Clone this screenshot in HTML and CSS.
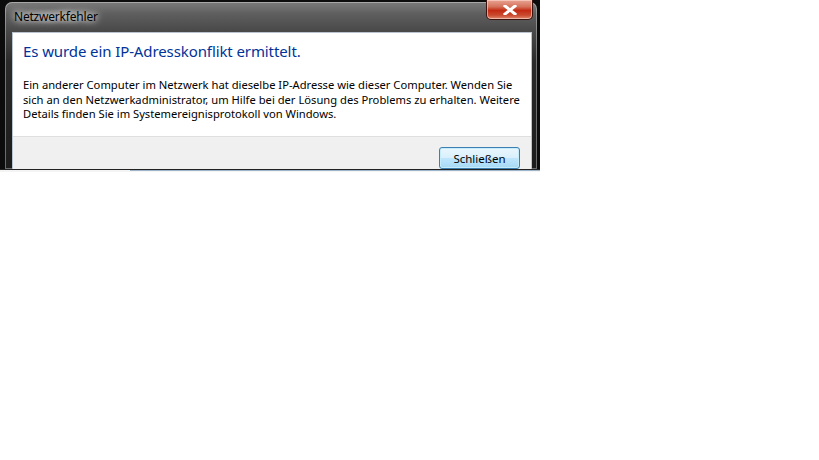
FILE: index.html
```html
<!DOCTYPE html>
<html lang="de">
<head>
<meta charset="utf-8">
<title>Netzwerkfehler</title>
<link rel="stylesheet" href="styles.css">
</head>
<body>
<div class="shot">
  <div class="frame">
    <div class="titlebar">
      <span class="title">Netzwerkfehler</span>
      <div class="close">
        <svg width="14" height="10" viewBox="0 0 14 10"><path d="M2 1 L12 9 M12 1 L2 9" stroke="#fff" stroke-width="3" stroke-linecap="square"/></svg>
      </div>
    </div>
    <div class="client">
      <div class="content">
        <h1 class="main">Es wurde ein IP-Adresskonflikt ermittelt.</h1>
        <p class="body">Ein anderer Computer im Netzwerk hat dieselbe IP-Adresse wie dieser Computer. Wenden Sie<br>sich an den Netzwerkadministrator, um Hilfe bei der Lösung des Problems zu erhalten. Weitere<br>Details finden Sie im Systemereignisprotokoll von Windows.</p>
      </div>
      <div class="footer">
        <button class="btn">Schließen</button>
      </div>
    </div>
  </div>
  <div class="desk"><span class="deskline"></span></div>
</div>
</body>
</html>
```
FILE: styles.css
```css
html, body {
  margin: 0;
  padding: 0;
  background: #fff;
}
.shot {
  width: 540px;
  height: 172px;
  overflow: hidden;
  background: #0c0c0c;
  display: flex;
  flex-direction: column;
  font-family: "Noto Sans", "Open Sans", sans-serif;
}
.frame {
  margin: 2px 3px 0 5px;
  height: 167px;
  border-radius: 7px 7px 0 0;
  background: linear-gradient(180deg, #7a7a7a 0px, #5e5e5e 12px, #4a4a4a 28px, #2a2a2a 60px, #1c1c1c 100%);
  box-shadow: inset 0 0 0 1px rgba(255,255,255,0.35);
  display: flex;
  flex-direction: column;
  padding: 0 5px 0 7px;
}
.titlebar {
  height: 30px;
  display: flex;
  align-items: flex-start;
  justify-content: space-between;
}
.title {
  margin: 6px 0 0 0;
  font-size: 12px;
  color: #000;
  text-shadow: 0 0 6px #fff, 0 0 10px rgba(255,255,255,0.8);
  background: radial-gradient(ellipse at center, rgba(255,255,255,0.25), rgba(255,255,255,0) 70%);
  padding: 0 2px;
  letter-spacing: -0.2px;
}
.close {
  width: 45px;
  height: 19px;
  margin-top: -2px;
  margin-right: -1px;
  border: 1px solid #3b1410;
  border-top: none;
  border-radius: 0 0 5px 5px;
  background: linear-gradient(180deg, #e8a493 0%, #d5735c 35%, #c42b13 55%, #c94a2f 80%, #e08a6e 100%);
  box-shadow: inset 0 0 0 1px rgba(255,220,210,0.6);
  display: flex;
  align-items: center;
  justify-content: center;
}
.client {
  flex: 1;
  display: flex;
  flex-direction: column;
  border: 1px solid #b9c4cf;
  border-bottom: none;
  background: #fff;
}
.content {
  height: 103px;
  padding: 0 10px;
}
.main {
  margin: 8px 0 0;
  font-size: 15px;
  font-weight: normal;
  color: #003399;
  letter-spacing: -0.1px;
}
.body {
  margin: 17px 0 0;
  font-size: 11.2px;
  line-height: 14.5px;
  color: #000;
  white-space: nowrap;
}
.footer {
  flex: 1;
  background: #f0f0f0;
  border-top: 1px solid #dfdfdf;
  display: flex;
  justify-content: flex-end;
  align-items: flex-start;
  padding: 10px 11px 0 0;
}
.btn {
  width: 81px;
  height: 22px;
  padding: 0;
  border: 1px solid #3c7fb1;
  border-radius: 3px;
  background: linear-gradient(180deg, #eaf6fd 0%, #d9f0fc 48%, #bee6fd 52%, #a7d9f5 100%);
  box-shadow: inset 0 0 0 1px #c5ecfd;
  font-family: "Noto Sans", "Open Sans", sans-serif;
  font-size: 11.5px;
  color: #000;
}
.desk {
  flex: 1;
  border-top: 1px solid #222;
  background: #f4f4f4;
}
.deskline {
  display: block;
  margin-left: 130px;
  height: 1px;
  background: #9db6cc;
}
```
